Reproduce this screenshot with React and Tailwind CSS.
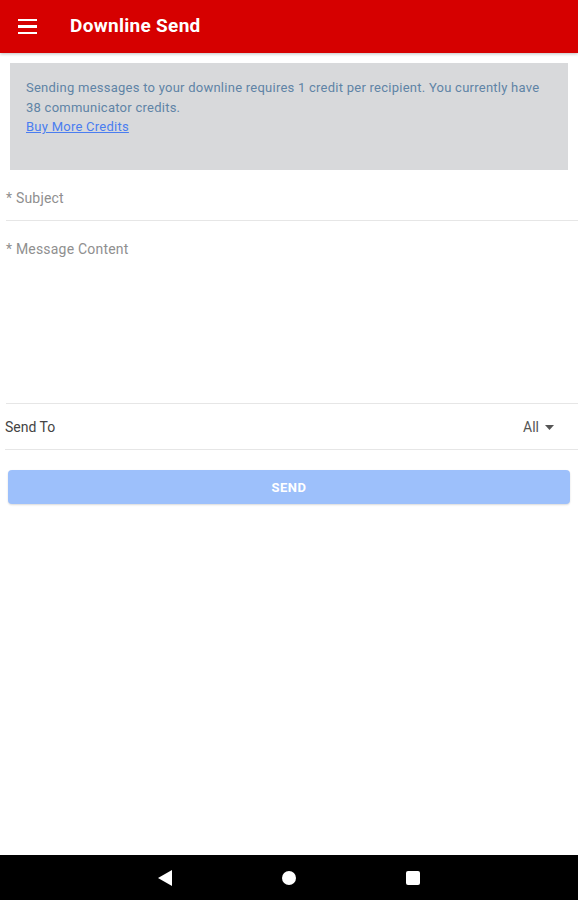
export default function App() {
  return (
    <div className="w-[578px] h-[900px] bg-white flex flex-col font-['Roboto',_'Liberation_Sans',_sans-serif] overflow-hidden">
      {/* app bar */}
      <div className="h-[53px] shrink-0 bg-[#d60000] flex items-center shadow-[0_1px_3px_rgba(0,0,0,0.25)]">
        <div className="ml-[18px] w-[19px] flex flex-col gap-[4px]">
          <span className="h-[2.5px] bg-white" />
          <span className="h-[2.5px] bg-white" />
          <span className="h-[2.5px] bg-white" />
        </div>
        <h1 className="ml-[33px] text-white text-[19px] font-bold tracking-[0.3px]">Downline Send</h1>
      </div>

      <div className="flex-1 flex flex-col">
        {/* credits notice */}
        <div className="mx-[10px] mt-[10px] h-[107px] bg-[#d8d9db] pl-[16px] pr-[22px] pt-[15px] text-[13px] leading-[19.5px] tracking-[0.25px] text-[#5f84a6]">
          <p>
            Sending messages to your downline requires 1 credit per recipient. You currently have 38 communicator credits.
          </p>
          <a href="#" className="text-[#4a7df0] underline">Buy More Credits</a>
        </div>

        {/* subject */}
        <div className="ml-[6px] h-[51px] border-b border-[#e6e6e6] flex items-center pt-[6px] text-[14px] text-[#8f8f8f] tracking-[0.2px]">
          * Subject
        </div>

        {/* message */}
        <div className="ml-[6px] h-[183px] border-b border-[#e6e6e6] pt-[18px] text-[14px] text-[#8f8f8f] tracking-[0.2px]">
          * Message Content
        </div>

        {/* send to */}
        <div className="ml-[5px] h-[46px] border-b border-[#e6e6e6] flex items-center justify-between pt-[2px] pr-[24px] text-[14px] text-[#444]">
          <span>Send To</span>
          <span className="flex items-center gap-[6px] text-[#555]">
            All
            <svg width="9" height="5" viewBox="0 0 9 5"><path d="M0 0h9L4.5 5z" fill="#555" /></svg>
          </span>
        </div>

        {/* send button */}
        <button className="mx-[8px] mt-[20px] h-[34px] rounded-[4px] bg-[#9dc0fb] text-white text-[13px] font-bold tracking-[0.5px] pt-[1px] shadow-[0_1px_2px_rgba(0,0,0,0.15)]">
          SEND
        </button>
      </div>

      {/* system nav bar */}
      <div className="h-[45px] shrink-0 bg-black flex items-center justify-center">
        <div className="w-[124px] flex justify-center">
          <svg width="14" height="16" viewBox="0 0 14 16"><path d="M14 0v16L0 8z" fill="white" /></svg>
        </div>
        <div className="w-[124px] flex justify-center">
          <span className="w-[14px] h-[14px] rounded-full bg-white" />
        </div>
        <div className="w-[124px] flex justify-center">
          <span className="w-[14px] h-[14px] rounded-[2px] bg-white" />
        </div>
      </div>
    </div>
  );
}
